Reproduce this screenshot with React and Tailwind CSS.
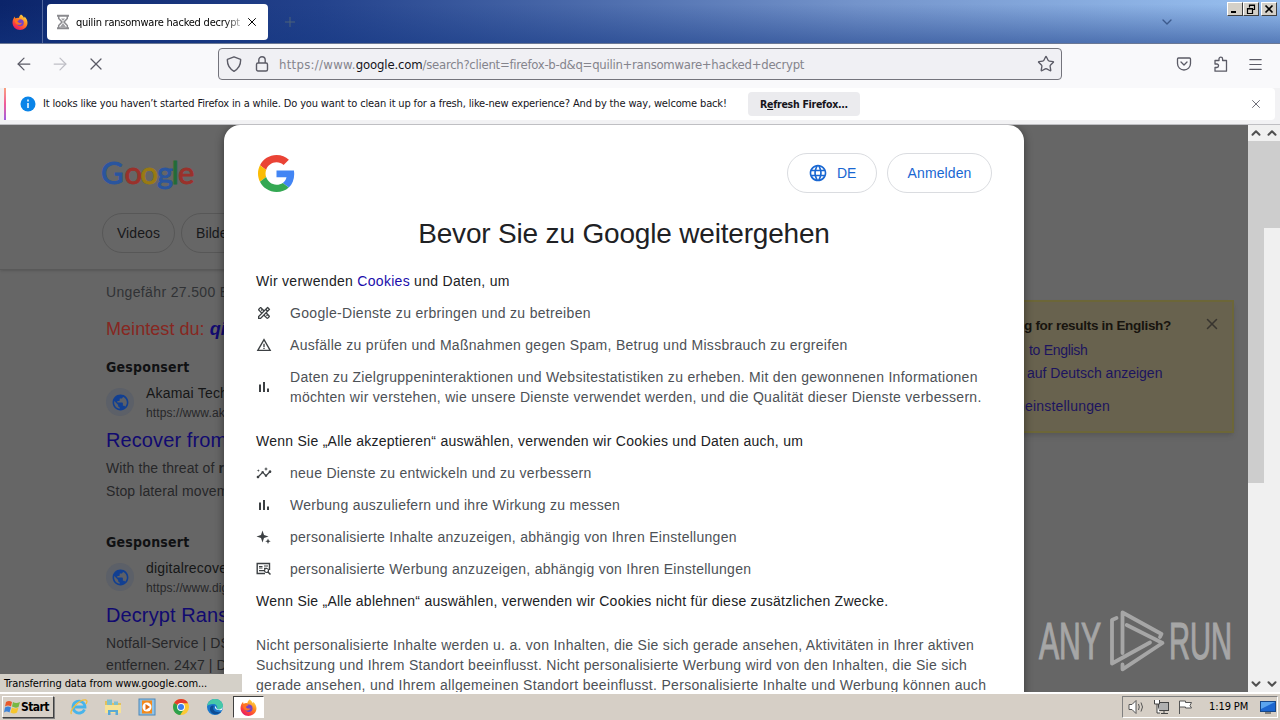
import React from "react";
import { ArrowLeft, ArrowRight, X, Plus, ChevronDown, ChevronUp, Menu, Star } from "lucide-react";
import { MdOutlineDesignServices, MdWarningAmber, MdInsights, MdPublic, MdLanguage } from "react-icons/md";

function FirefoxIcon({ size }) {
  return (
    <svg width={size} height={size} viewBox="0 0 32 32">
      <defs>
        <linearGradient id="fxBody" x1="0.85" y1="0.05" x2="0.25" y2="1">
          <stop offset="0" stopColor="#ffe14a" />
          <stop offset="0.4" stopColor="#ff8a1e" />
          <stop offset="0.75" stopColor="#fb3c3f" />
          <stop offset="1" stopColor="#e01570" />
        </linearGradient>
      </defs>
      <path d="M18 1c3 2 5 4 6 7 1-1 1-2 1-3 4 4 6 8 6 13 0 8-7 14-15 14S1 26 1 17c0-5 2-9 5-12 0 2 0 3 1 4 2-1 5-2 7-1 0-3 2-5 4-7z" fill="url(#fxBody)" />
      <circle cx="16.500" cy="17.500" r="7" fill="#7542c8" />
      <path d="M6 10c4-2 7-1 10 2-2 0-4 1-5 3 2 3 6 4 9 2-1 5-7 6-11 3-3-2-4-6-3-10z" fill="#ff7420" />
    </svg>
  );
}

function GoogleG() {
  return (
    <svg width="37" height="37" viewBox="0 0 48 48">
      <path fill="#ea4335" d="M24 9.5c3.54 0 6.71 1.22 9.21 3.6l6.85-6.85C35.9 2.38 30.47 0 24 0 14.62 0 6.51 5.38 2.56 13.22l7.98 6.19C12.43 13.72 17.74 9.5 24 9.5z" />
      <path fill="#4285f4" d="M46.98 24.55c0-1.57-.15-3.09-.38-4.55H24v9.02h12.94c-.58 2.96-2.26 5.48-4.78 7.18l7.73 6c4.51-4.18 7.09-10.36 7.09-17.65z" />
      <path fill="#fbbc05" d="M10.53 28.59c-.48-1.45-.76-2.99-.76-4.59s.27-3.14.76-4.59l-7.98-6.19C.92 16.46 0 20.12 0 24c0 3.88.92 7.54 2.56 10.78l7.97-6.19z" />
      <path fill="#34a853" d="M24 48c6.48 0 11.93-2.13 15.89-5.81l-7.73-6c-2.15 1.45-4.92 2.3-8.16 2.3-6.26 0-11.57-4.22-13.47-9.91l-7.98 6.19C6.51 42.62 14.62 48 24 48z" />
    </svg>
  );
}

function SparkIcon() {
  return (
    <svg width="16" height="16" viewBox="0 0 16 16" fill="#3c4043">
      <path d="M6.500 1.500L8 6l4.500 1.500L8 9l-1.500 4.500L5 9 .5 7.500 5 6z" />
      <path d="M12 9.500l.8 1.900 1.900.8-1.900.8-.8 1.900-.8-1.900-1.900-.8 1.900-.8z" />
    </svg>
  );
}

function BarsIcon() {
  return (
    <svg width="16" height="16" viewBox="0 0 16 16" fill="#3c4043">
      <path d="M3 5.500h2V13H3zM7 3h2v10H7zM11 9.500h2V13h-2z" />
    </svg>
  );
}

function AdIcon() {
  return (
    <svg width="16" height="16" viewBox="0 0 16 16" fill="none" stroke="#3c4043">
      <path d="M9 12.500H1.200v-10h12.300V9" strokeWidth="1.400" />
      <path d="M3 5.500h3.500M3 7h3.500M8 5h4M8 7.300h3M3 9.700h5" strokeWidth="1.200" />
      <circle cx="10.500" cy="9.500" r="2" strokeWidth="1.200" />
      <path d="M12 11l2.500 2.500" strokeWidth="1.500" />
    </svg>
  );
}

function TabBar() {
  return (
    <div className="flex h-11 shrink-0 items-start border-b border-[#6b7894] bg-[linear-gradient(180deg,rgba(10,36,106,0)_10%,rgba(20,55,130,0.5)_100%),linear-gradient(90deg,#0b246a_0%,#23428c_25%,#7494cb_67%,#98c0f0_100%)]">
      <div className="flex h-[43px] w-[43px] items-center justify-center border-r border-[#52689f] pr-[2px]">
        <FirefoxIcon size={16} />
      </div>
      <div className="mt-1 ml-1 flex h-9 w-[221px] items-center rounded bg-white pl-[9px]">
        <svg width="14" height="16" viewBox="0 0 14 16" fill="none" stroke="#8a8a8e">
          <path d="M1 1.700h12M1 14.300h12" strokeWidth="2" />
          <path d="M2.700 2v2.500L6 8l-3.300 3.500V14M11.300 2v2.500L8 8l3.300 3.500V14" strokeWidth="1.500" />
          <path d="M7 9l3 4H4zM7 7L5 4.500h4z" fill="#a0a0a4" stroke="none" />
        </svg>
        <div className="ml-[6px] w-[165px] bg-linear-to-r from-black from-88% to-[#c0c0c0] bg-clip-text pt-px font-['DejaVu_Sans_Condensed'] text-[11px] leading-4 tracking-[-0.23px] whitespace-nowrap text-transparent">quilin ransomware hacked decrypt</div>
        <X className="ml-[4px] h-3.5 w-3.5 text-black" strokeWidth={1.700} />
      </div>
      <Plus className="mt-[14px] ml-[14px] h-4 w-4 text-[#4d6378]" strokeWidth={1.500} />
      <ChevronDown className="mt-[14px] mr-[52px] ml-auto h-4 w-4 text-[#3c5a8c]" strokeWidth={2} />
      <div className="mt-0.5 mr-[3px] flex">
        {["min", "max", "close"].map((k) => (
          <div key={k} className={`flex h-[14px] w-4 items-center justify-center border border-t-white border-r-[#404040] border-b-[#404040] border-l-white bg-[#d4d0c8] ${k === "close" ? "ml-0.5" : ""}`}>
            <svg width="10" height="10" viewBox="0 0 10 10" fill="none" stroke="#000">
              {k === "min" && <path d="M1 8h5" strokeWidth="2" />}
              {k === "max" && <path d="M3.500 3.500V1h5v4.500H7M3 1.500h6M1.500 9.500v-5h5v5zM1 5h6" strokeWidth="1.200" />}
              {k === "close" && <path d="M1.500 1.500l7 7m0-7l-7 7" strokeWidth="1.700" />}
            </svg>
          </div>
        ))}
      </div>
    </div>
  );
}

function Toolbar() {
  return (
    <div className="flex h-11 shrink-0 items-center bg-[#f9f9fb] pb-1 text-[#5b5b66]">
      <ArrowLeft className="ml-[14px] h-5 w-5" strokeWidth={1.500} />
      <ArrowRight className="ml-4 h-5 w-5 text-[#bfbfc6]" strokeWidth={1.500} />
      <X className="ml-4 h-5 w-5" strokeWidth={1.500} />
      <div className="ml-28 flex h-8 w-[844px] items-center rounded border border-[#74747c] bg-[#f0f0f4] pl-[7px]">
        <svg width="16" height="16" viewBox="0 0 16 16" fill="none" stroke="#5b5b66" strokeWidth="1.400">
          <path d="M8 .8l6.600 2.500c.3 5-1.200 9-6.600 12C2.600 12.300 1.100 8.300 1.400 3.300z" strokeLinejoin="round" />
        </svg>
        <svg className="ml-[13px]" width="14" height="16" viewBox="0 0 14 16" fill="none" stroke="#5b5b66" strokeWidth="1.400">
          <rect x="1.500" y="7" width="11" height="8" rx="1.500" />
          <path d="M3.800 7V4a3.200 3.200 0 0 1 6.400 0v3" />
        </svg>
        <div className="ml-[10px] pt-px font-['DejaVu_Sans_Condensed'] text-[13px] leading-5 tracking-[-0.27px] whitespace-nowrap text-[#84848c]">
          <span className="tracking-[0.3px]">https://www.</span><span className="tracking-[-0.15px] text-[#15141a]">google.com</span>/search?client=firefox-b-d&amp;q=quilin+ransomware+hacked+decrypt
        </div>
        <Star className="mr-[6px] ml-auto h-[18px] w-[18px]" strokeWidth={1.800} />
      </div>
      <svg className="ml-[114px]" width="16" height="16" viewBox="0 0 16 16" fill="none" stroke="#5b5b66" strokeWidth="1.300" strokeLinecap="round" strokeLinejoin="round">
        <path d="M2.500 2h11c.6 0 1 .4 1 1v4.500a6.500 6.500 0 0 1-13 0V3c0-.6.400-1 1-1z" />
        <path d="M5 6l3 3 3-3" />
      </svg>
      <svg className="ml-[21px]" width="16" height="16" viewBox="0 0 16 16" fill="none" stroke="#5b5b66" strokeWidth="1.300" strokeLinejoin="round">
        <path d="M2 5.500V4.500h4V3a1.800 1.800 0 0 1 3.600 0v1.500h3.900v10.700H2v-3.700h1.800a1.600 1.600 0 0 0 0-3.500H2z" />
      </svg>
      <Menu className="ml-[18px] h-[17px] w-[17px]" strokeWidth={1.700} />
    </div>
  );
}

function Notice() {
  return (
    <div className="h-[37px] shrink-0 border-b border-[#bfbfc3] bg-[#f2f2f4] pl-1">
      <div className="flex h-8 w-[1271px] items-center rounded-r bg-white">
        <div className="h-8 w-0.5 bg-linear-to-b from-[#f9a07e] via-[#f05a98] to-[#a05ae0]" />
        <svg className="ml-[14px]" width="16" height="16" viewBox="0 0 16 16">
          <circle cx="8" cy="8" r="7.500" fill="#0a84e8" />
          <path d="M8 7v5M8 3.500v2" stroke="#fff" strokeWidth="1.500" />
        </svg>
        <div className="ml-[7px] w-[684px] font-['DejaVu_Sans_Condensed'] text-[11px] leading-4 tracking-[-0.15px] whitespace-nowrap text-[#15141a]">
          It looks like you haven’t started Firefox in a while. Do you want to clean it up for a fresh, like-new experience? And by the way, welcome back!
        </div>
        <div className="ml-[21px] flex h-6 w-28 items-center justify-center rounded bg-[#ebebee] pt-px font-['DejaVu_Sans_Condensed'] text-[10.500px] font-bold tracking-[-0.27px] whitespace-nowrap text-[#15141a]">
          <span>R<span className="underline">e</span>fresh Firefox...</span>
        </div>
        <X className="mr-[12px] ml-auto h-3.5 w-3.5 text-[#5b5b66]" strokeWidth={1.500} />
      </div>
    </div>
  );
}

function Globe() {
  return (
    <div className="mb-0.5 flex h-7 w-7 shrink-0 items-center justify-center rounded-full bg-[#5c6068]">
      <MdPublic className="h-[19px] w-[19px] text-[#113f92]" />
    </div>
  );
}

function Result({ site, url, title, lines, lead }) {
  return (
    <div className="whitespace-nowrap text-[#262729]">
      <div className="font-['DejaVu_Sans_Condensed'] text-sm leading-5 font-bold tracking-[0.22px] text-[#101113]">Gesponsert</div>
      <div className="mt-[6px] flex h-10 items-center">
        <Globe />
        <div className="ml-3">
          <div className="text-sm leading-5 tracking-[0.2px] text-[#151617]">{site}</div>
          <div className="text-xs leading-5 tracking-[0.1px]">{url}</div>
        </div>
      </div>
      <div className="mt-1 text-xl leading-[26px] tracking-[0.1px] text-[#110a70]">{title}</div>
      <div className={`mt-1 text-sm tracking-[0.1px] ${lead}`}>
        {lines.map((l, i) => <div key={i}>{l}</div>)}
      </div>
    </div>
  );
}

function SearchPage() {
  return (
    <div className="flex h-[567px] w-[1248px] bg-[#666666]">
      <div className="w-[1000px]">
        <div className="h-[145px] border-b border-[#595959] pt-[30px] pl-[102px] shadow-sm">
          <svg className="overflow-visible" width="93" height="40" viewBox="0 0 93 40" fontFamily="Lato, sans-serif" fontSize="31" strokeWidth="0.900">
            <text y="28.500">
              <tspan x="-1" fill="#2a559f" stroke="#2a559f">G</tspan><tspan x="22.500" fill="#9a312b" stroke="#9a312b">o</tspan><tspan x="38.500" fill="#9a7a12" stroke="#9a7a12">o</tspan><tspan x="55" fill="#2a559f" stroke="#2a559f">g</tspan><tspan x="69.500" fill="#226c38" stroke="#226c38">l</tspan><tspan x="76" fill="#9a312b" stroke="#9a312b">e</tspan>
            </text>
          </svg>
          <div className="mt-[18px] flex gap-[6px] text-sm tracking-[0.1px] text-[#17181a]">
            <div className="flex h-10 w-[73px] items-center justify-center rounded-full border border-[#575757]">Videos</div>
            <div className="flex h-10 w-[70px] items-center rounded-full border border-[#575757] pl-[14px]">Bilde</div>
          </div>
        </div>
        <div className="pl-[106px]">
          <div className="mt-3 text-sm leading-5 tracking-[0.35px] whitespace-nowrap text-[#303235]">Ungefähr 27.500 E</div>
          <div className="mt-[15px] mb-4 text-lg leading-6 tracking-[0.05px] whitespace-nowrap text-[#862721]">Meintest du: <span className="font-bold text-[#110a70] italic">qi</span></div>
          <Result site="Akamai Tech" url="https://www.ak" title="Recover from" lead="leading-[23px]" lines={[<>With the threat of <b>r</b></>, "Stop lateral movem"]} />
          <div className="h-[29px]" />
          <Result site="digitalrecove" url="https://www.dig" title="Decrypt Rans" lead="leading-[22px]" lines={["Notfall-Service | DS", "entfernen. 24x7 | D"]} />
        </div>
      </div>
      <div className="mt-[175px] flex h-[133px] w-[234px] justify-between border-2 border-[#6c6638] bg-[#68624e] pl-[22px] shadow-md">
        <div className="text-sm whitespace-nowrap text-[#1c145f]">
          <div className="mt-[14px] text-[13.500px] leading-5 font-bold tracking-[-0.3px] text-[#17140e]">g for results in English?</div>
          <div className="mt-1 pl-[5px] leading-5 tracking-[-0.3px]">to English</div>
          <div className="mt-[3px] pl-[3px] leading-5">auf Deutsch anzeigen</div>
          <div className="mt-[13px] -ml-[7px] leading-5 tracking-[0.2px]">neinstellungen</div>
        </div>
        <X className="mt-[13px] mr-[11px] h-[18px] w-[18px] text-[#38352f]" strokeWidth={2} />
      </div>
    </div>
  );
}

function Item({ icon, children, track = "tracking-[0.275px]" }) {
  return (
    <div className="flex items-center py-[6px] text-[#4d5156]">
      <div className="flex w-[34px] shrink-0 text-[#3c4043]">{icon}</div>
      <div className={`leading-5 whitespace-nowrap ${track}`}>{children}</div>
    </div>
  );
}

function Dialog() {
  return (
    <div className="absolute top-0 left-[224px] h-[580px] w-[800px] rounded-t-2xl bg-white px-8 pt-7 text-sm text-[#202124] shadow-[0_2px_10px_rgba(0,0,0,0.45)]">
      <div className="flex h-10 items-center text-[#1967d2]">
        <div className="mt-px ml-[2px]"><GoogleG /></div>
        <div className="ml-auto flex h-10 w-[90px] items-center justify-center gap-[9px] rounded-full border border-[#dadce0] tracking-[-0.2px]"><MdLanguage className="h-5 w-5" />DE</div>
        <div className="ml-[10px] flex h-10 w-[105px] items-center justify-center rounded-full border border-[#dadce0] tracking-[0.1px]">Anmelden</div>
      </div>
      <div className="mt-[23px] text-center text-[28px] leading-9 tracking-[-0.18px]">Bevor Sie zu Google weitergehen</div>
      <div className="mt-[19px] mb-[6px] leading-5 tracking-[0.29px]">Wir verwenden <span className="text-[#1a0dab]">Cookies</span> und Daten, um</div>
      <Item track="tracking-[0.31px]" icon={<MdOutlineDesignServices className="h-4 w-4" />}>Google-Dienste zu erbringen und zu betreiben</Item>
      <Item track="tracking-[0.29px]" icon={<MdWarningAmber className="h-4 w-4" />}>Ausfälle zu prüfen und Maßnahmen gegen Spam, Betrug und Missbrauch zu ergreifen</Item>
      <Item track="tracking-[0.285px]" icon={<BarsIcon />}>Daten zu Zielgruppeninteraktionen und Websitestatistiken zu erheben. Mit den gewonnenen Informationen<br />möchten wir verstehen, wie unsere Dienste verwendet werden, und die Qualität dieser Dienste verbessern.</Item>
      <div className="mt-[18px] mb-[6px] leading-5 tracking-[0.26px]">Wenn Sie „Alle akzeptieren“ auswählen, verwenden wir Cookies und Daten auch, um</div>
      <Item icon={<MdInsights className="h-4 w-4" />}>neue Dienste zu entwickeln und zu verbessern</Item>
      <Item icon={<BarsIcon />}>Werbung auszuliefern und ihre Wirkung zu messen</Item>
      <Item icon={<SparkIcon />}>personalisierte Inhalte anzuzeigen, abhängig von Ihren Einstellungen</Item>
      <Item icon={<AdIcon />}>personalisierte Werbung anzuzeigen, abhängig von Ihren Einstellungen</Item>
      <div className="mt-[6px] leading-5 tracking-[0.24px]">Wenn Sie „Alle ablehnen“ auswählen, verwenden wir Cookies nicht für diese zusätzlichen Zwecke.</div>
      <div className="mt-6 leading-5 whitespace-nowrap text-[#4d5156]">
        <div className="tracking-[0.285px]">Nicht personalisierte Inhalte werden u. a. von Inhalten, die Sie sich gerade ansehen, Aktivitäten in Ihrer aktiven</div>
        <div className="tracking-[0.265px]">Suchsitzung und Ihrem Standort beeinflusst. Nicht personalisierte Werbung wird von den Inhalten, die Sie sich</div>
        <div className="tracking-[0.31px]">gerade ansehen, und Ihrem allgemeinen Standort beeinflusst. Personalisierte Inhalte und Werbung können auch</div>
      </div>
    </div>
  );
}

function Scrollbar({ thumb }) {
  return (
    <div className="flex h-full w-4 flex-col items-center bg-[#f0f0f0] text-[#505050]">
      <ChevronUp className="mt-px mb-px h-3.5 w-3.5 shrink-0" strokeWidth={3.500} />
      <div className={`w-4 shrink-0 bg-[#cdcdcd] ${thumb}`} />
      <ChevronDown className="mt-auto mb-px h-3.5 w-3.5 shrink-0" strokeWidth={3.500} />
    </div>
  );
}

function Watermark() {
  return (
    <svg className="absolute top-[482px] left-[1036px]" width="200" height="68" viewBox="0 0 200 68" fontFamily="'Liberation Sans', Arial, sans-serif" fill="#a6a6a6">
      <g fontSize="51" stroke="#a6a6a6" strokeWidth="1.200">
        <text x="3" y="52" textLength="62" lengthAdjust="spacingAndGlyphs">ANY</text>
        <text x="133" y="52" textLength="63" lengthAdjust="spacingAndGlyphs">RUN</text>
      </g>
      <g fill="none" stroke="#a6a6a6" strokeWidth="3.800" strokeLinejoin="round" strokeLinecap="round">
        <path d="M86.500 46V5.500L125.500 27l-1.500 3" />
        <path d="M80.500 11l-4.500 2v43.500L114 35.500" />
        <path d="M86.500 57.500v4.800L126.500 36 90.700 18" />
      </g>
    </svg>
  );
}

function TaskIcon({ name }) {
  return (
    <svg width="18" height="18" viewBox="0 0 18 18" fill="none">
      {name === "ie" && (
        <g>
          <path d="M14.500 11.500A6 6 0 1 1 15 9H4" stroke="#48b4ea" strokeWidth="2.800" />
          <path d="M1.500 16C-1 13 9 1 16 2c1.500.5 1 2 0 4" stroke="#f2bd3a" strokeWidth="1.300" />
        </g>
      )}
      {name === "folder" && (
        <g>
          <path d="M1 3h6l1.500 2H17v10H1z" fill="#e2c15c" />
          <path d="M3 1.500h5V8H3zM10 3.500h4V8h-4z" fill="#7fc0cf" />
          <path d="M1 7h16v8H1z" fill="#f6e296" />
          <path d="M4 17v-5h10v5h-2.500v-3h-5v3z" fill="#5aa9d4" />
        </g>
      )}
      {name === "media" && (
        <g>
          <rect x="1" y="1" width="16" height="16" fill="#8fc3e8" stroke="#4c87b8" />
          <rect x="4" y="2.500" width="10" height="13" fill="#f48a1b" />
          <circle cx="9" cy="9" r="4.500" fill="#fff" />
          <path d="M7.500 6l4.500 3-4.500 3z" fill="#e06a10" />
        </g>
      )}
      {name === "chrome" && (
        <g>
          <circle cx="9" cy="9" r="8" fill="#fcc934" />
          <path d="M9 9L2.100 5A8 8 0 0 1 16 5.200H9z" fill="#e33b2e" />
          <path d="M2.100 5A8 8 0 0 0 8.200 17L12 11 9 9z" fill="#2da14c" />
          <circle cx="9" cy="9" r="3.900" fill="#fff" />
          <circle cx="9" cy="9" r="3" fill="#3b7fee" />
        </g>
      )}
      {name === "edge" && (
        <g>
          <circle cx="9" cy="9" r="8" fill="#1b78cc" />
          <path d="M1.200 8C2 3 5.500 1 9 1c5 0 8 3.500 8 7 0 3-3 4-6 3 1-3-1-5-4-5-3 0-5 1-5.800 2z" fill="#46c8a8" />
          <path d="M8 8c-2 3 0 7 7 6-5 5-12 1-11-4 .5-2 2-3 4-2z" fill="#0d4c94" />
          <path d="M9.500 8c-1.500 1.500 0 5 6.500 4l1-3.500c-1 2.500-4 3.500-6 2.500z" fill="#e8f6fb" />
        </g>
      )}
    </svg>
  );
}

function Taskbar() {
  return (
    <div className="flex h-7 shrink-0 items-center border-t-2 border-white bg-[#d6cfc6] font-['DejaVu_Sans_Condensed'] text-[11px] text-black">
      <div className="ml-0.5 flex h-[22px] w-[52px] items-center border border-t-white border-r-[#404040] border-b-[#404040] border-l-white pl-px shadow-[1px_1px_0_#808080]">
        <svg width="17" height="16" viewBox="0 0 17 16">
          <path d="M2 3q3-2 6 0L7 7.500q-3-2-6 0z" fill="#e8592a" />
          <path d="M9 3q3 2 7 0l-1.500 5q-3 1.500-6.500-.5z" fill="#76b842" />
          <path d="M1 8.500q3-2 6 0l-1.500 5q-3-2-5.500 0z" fill="#3d83d8" />
          <path d="M8 8.500q3 2 6.500 0l-1.500 5q-3 2-6.500 0z" fill="#f6c62d" />
        </svg>
        <span className="text-xs font-bold tracking-[-0.55px]">Start</span>
      </div>
      <div className="ml-4 flex gap-4">
        {["ie", "folder", "media", "chrome", "edge"].map((n) => <TaskIcon key={n} name={n} />)}
      </div>
      <div className="ml-[9px] flex h-[22px] w-[31px] items-center justify-center border border-t-[#404040] border-r-white border-b-white border-l-[#404040] bg-white">
        <FirefoxIcon size={17} />
      </div>
      <div className="mr-0.5 ml-auto flex h-[22px] w-[156px] items-center border border-t-[#808080] border-r-white border-b-white border-l-[#808080] pl-[5px]">
        <svg width="18" height="16" viewBox="0 0 18 16" fill="#fff" stroke="#555">
          <path d="M1 5.500h3l4-4v13l-4-4H1z" />
          <path d="M10.500 5q1.500 3 0 6M13 3.500q3 4.500 0 9" fill="none" />
        </svg>
        <svg className="ml-[7px]" width="17" height="16" viewBox="0 0 17 16" fill="none" stroke="#444">
          <rect x="5.500" y="3.500" width="10" height="8" fill="#b0b0b0" />
          <path d="M8 14.500h7M11 12v2" />
          <path d="M1.500 1v4h5V1M4 5v9h3" fill="#fff" />
        </svg>
        <svg className="ml-[7px]" width="17" height="16" viewBox="0 0 17 16" fill="#fff" stroke="#555">
          <path d="M2.500 15V2h6v1.500h6L13 6.500l1.500 2.500h-6V8h-6" />
        </svg>
        <span className="ml-[15px] w-[42px] pt-px text-[11px] tracking-[-0.1px] whitespace-nowrap">1:19 PM</span>
        <svg className="ml-[9px]" width="16" height="14" viewBox="0 0 16 14">
          <rect x="0.500" y="1.500" width="15" height="10" fill="#1d66cf" stroke="#174788" />
          <path d="M1 2h14L1 9z" fill="#5ba4ee" />
          <path d="M5 13h6" stroke="#333" />
        </svg>
      </div>
    </div>
  );
}

export default function App() {
  return (
    <div className="flex h-[720px] w-[1280px] flex-col overflow-hidden bg-white font-['Liberation_Sans',Arial,sans-serif]">
      <TabBar />
      <Toolbar />
      <Notice />
      <div className="relative flex h-[567px] shrink-0 overflow-hidden">
        <SearchPage />
        <Scrollbar thumb="h-[342px]" />
        <Scrollbar thumb="h-[87px]" />
        <Dialog />
        <Watermark />
        <div className="absolute bottom-0 left-0 flex h-[18px] w-[242px] items-center bg-[#d4d0c8] pt-0.5 pl-1 font-['DejaVu_Sans_Condensed'] text-[11px] tracking-[-0.1px] whitespace-nowrap text-black">Transferring data from www.google.com...</div>
      </div>
      <Taskbar />
    </div>
  );
}
